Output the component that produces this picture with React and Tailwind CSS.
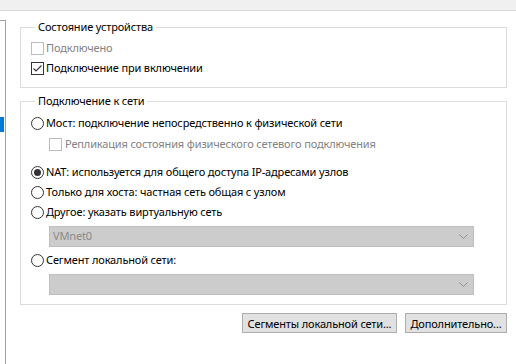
import React from 'react';

const CheckBox = ({ checked, disabled }) => (
  <span
    className={`w-[13px] h-[13px] shrink-0 border bg-white flex items-center justify-center ${
      disabled ? 'border-[#bcbcbc]' : 'border-[#333333]'
    }`}
  >
    {checked && (
      <svg width="11" height="11" viewBox="0 0 11 11">
        <path d="M1.5 5.5 L4 8 L9.5 2.5" fill="none" stroke="#333333" strokeWidth="1.1" />
      </svg>
    )}
  </span>
);

const Radio = ({ checked }) => (
  <span className="w-[13px] h-[13px] shrink-0 rounded-full border border-[#333333] bg-white flex items-center justify-center">
    {checked && <span className="w-[7px] h-[7px] rounded-full bg-[#333333]" />}
  </span>
);

const Row = ({ children, className = '' }) => (
  <div className={`h-[20px] flex items-center gap-[2px] whitespace-nowrap ${className}`}>{children}</div>
);

const Combo = ({ value }) => (
  <div className="ml-[18px] w-[425px] h-[21px] bg-[#cccccc] border border-[#bfbfbf] flex items-center justify-between pl-[3px] pr-[5px]">
    <span className="text-[#8a8a8a]">{value}</span>
    <svg width="9" height="6" viewBox="0 0 9 6">
      <path d="M0.5 0.5 L4.5 4.5 L8.5 0.5" fill="none" stroke="#8f8f8f" strokeWidth="1" />
    </svg>
  </div>
);

const Group = ({ title, children, className = '' }) => (
  <fieldset className={`border border-[#dcdcdc] pl-[10px] ${className}`}>
    <legend className="ml-[4px] px-[3px] leading-[16px]">{title}</legend>
    {children}
  </fieldset>
);

export default function App() {
  return (
    <div
      className="w-[516px] h-[364px] bg-white text-[11px] tracking-[-0.15px] text-black overflow-hidden flex flex-col"
      style={{ fontFamily: '"Noto Sans", "Liberation Sans", sans-serif' }}
    >
      <div className="h-[11px] shrink-0 bg-[#f0f0f0] border-b border-[#d6d6d6]" />
      <div className="flex flex-1">
        <div className="w-[6px] mt-[9px] border-t border-r border-[#a0a0a0] pt-[96px]">
          <div className="w-[4px] h-[15px] bg-[#0078d7]" />
        </div>
        <div className="flex-1 pl-[14px] pr-[9px] pt-[8px]">
          <Group title="Состояние устройства" className="pt-[3px] pb-[9px]">
            <Row>
              <CheckBox disabled />
              <span className="text-[#838383]">Подключено</span>
            </Row>
            <Row>
              <CheckBox checked />
              <span>Подключение при включении</span>
            </Row>
          </Group>

          <Group title="Подключение к сети" className="mt-[5px] pt-[4px] pb-[9px]">
            <Row>
              <Radio />
              <span>Мост: подключение непосредственно к физической сети</span>
            </Row>
            <Row className="pl-[18px] mt-[1px] gap-[3px]">
              <CheckBox disabled />
              <span className="text-[#838383]">Репликация состояния физического сетевого подключения</span>
            </Row>
            <Row className="mt-[8px]">
              <Radio checked />
              <span>NAT: используется для общего доступа IP-адресами узлов</span>
            </Row>
            <Row>
              <Radio />
              <span>Только для хоста: частная сеть общая с узлом</span>
            </Row>
            <Row>
              <Radio />
              <span>Другое: указать виртуальную сеть</span>
            </Row>
            <div className="mt-[4px]">
              <Combo value="VMnet0" />
            </div>
            <Row className="mt-[3px]">
              <Radio />
              <span>Сегмент локальной сети:</span>
            </Row>
            <div className="mt-[4px]">
              <Combo value="" />
            </div>
          </Group>

          <div className="flex justify-end gap-[8px] mt-[8px]">
            <button className="w-[155px] h-[20px] bg-[#e1e1e1] border border-[#adadad] leading-none whitespace-nowrap">
              Сегменты локальной сети...
            </button>
            <button className="w-[102px] h-[20px] bg-[#e1e1e1] border border-[#adadad] leading-none whitespace-nowrap">
              Дополнительно...
            </button>
          </div>
        </div>
      </div>
    </div>
  );
}
